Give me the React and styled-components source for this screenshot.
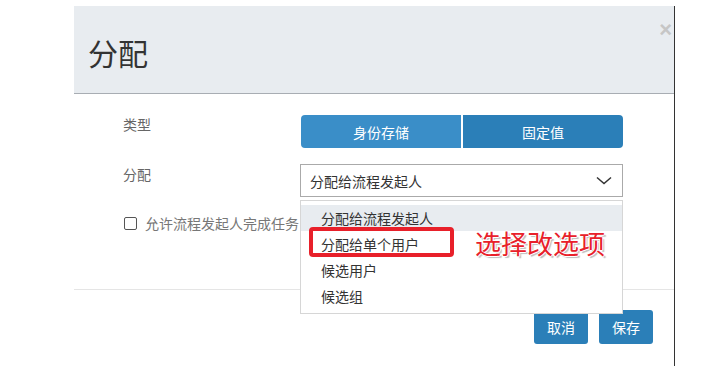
import React from "react";
import styled, { createGlobalStyle } from "styled-components";

const Global = createGlobalStyle`
  html, body { margin: 0; padding: 0; background: #fff; }
  body { font-family: "Noto Sans CJK SC", "Noto Sans", sans-serif; font-size: 14px; color: #333; }
  *, *::before, *::after { box-sizing: border-box; }
`;

const Page = styled.div`
  width: 721px;
  height: 381px;
  padding: 6px 0 0 74px;
  overflow: hidden;
`;

const Modal = styled.div`
  width: 601px;
  height: 360px;
  border-right: 1px solid #333;
  display: flex;
  flex-direction: column;
  background: #fff;
`;

const Header = styled.div`
  height: 88px;
  flex: none;
  background: #e8ecf0;
  border-bottom: 1px solid #a8adb3;
  display: flex;
  justify-content: space-between;
  align-items: flex-start;
  padding: 26px 2px 0 14px;
`;

const Title = styled.h1`
  margin: 0;
  font-size: 30px;
  line-height: 40px;
  font-weight: 400;
  color: #333;
`;

const Close = styled.span`
  margin-top: -14px;
  font-family: "Liberation Sans", sans-serif;
  font-size: 22px;
  line-height: 24px;
  font-weight: 700;
  color: #c6c6c6;
`;

const Body = styled.div`
  height: 196px;
  flex: none;
  padding: 21px 0 0 49px;
  display: grid;
  grid-template-columns: 177px 323px;
  grid-auto-rows: min-content;
  row-gap: 16px;
  border-bottom: 1px solid #e5e5e5;
`;

const Label = styled.div`
  line-height: 20px;
  color: #666;
  margin-top: ${(p) => p.$offset || 0}px;
`;

const Segmented = styled.div`
  display: flex;
  gap: 2px;
  height: 33px;
  padding-left: 1px;
`;

const Segment = styled.button`
  flex: 1;
  border: none;
  margin: 0;
  font-family: inherit;
  font-size: 14px;
  color: #fff;
  background: ${(p) => (p.$active ? "#3a8ec8" : "#2b7fb8")};
  border-radius: ${(p) => (p.$first ? "4px 0 0 4px" : "0 4px 4px 0")};
  cursor: pointer;
`;

const SelectWrap = styled.div`
  position: relative;
`;

const SelectBox = styled.div`
  height: 33px;
  border: 1px solid #aaa;
  display: flex;
  align-items: center;
  justify-content: space-between;
  padding: 0 10px 0 9px;
  color: #333;
  background: #fff;
`;

const Menu = styled.ul`
  position: absolute;
  top: 36px;
  left: 0;
  width: 323px;
  margin: 0;
  padding: 4px 0;
  list-style: none;
  background: #fff;
  border: 1px solid #d6d6d6;
  z-index: 5;
`;

const Option = styled.li`
  position: relative;
  height: 26px;
  line-height: 26px;
  padding-left: 20px;
  color: #333;
  background: ${(p) => (p.$hover ? "#e8ecf0" : "transparent")};
  ${(p) =>
    p.$marked &&
    `
    &::before {
      content: "";
      position: absolute;
      left: 8px;
      top: -4px;
      width: 145px;
      height: 30px;
      border: 4px solid #e8202a;
      border-radius: 4px;
    }
  `}
`;

const Note = styled.span`
  position: absolute;
  left: 174px;
  top: -3px;
  font-size: 26px;
  line-height: 30px;
  color: #e8202a;
  white-space: nowrap;
  text-shadow: 1px 0 0 #fff, -1px 0 0 #fff, 0 1px 0 #fff, 0 -1px 0 #fff,
    2px 2px 1px #bdbdbd;
`;

const CheckRow = styled.label`
  grid-column: 1 / -1;
  display: flex;
  align-items: center;
  gap: 8px;
  height: 20px;
  padding-left: 1px;
  color: #777;
`;

const Box = styled.span`
  width: 13px;
  height: 13px;
  border: 1px solid #555;
  border-radius: 2px;
  background: #fff;
`;

const Footer = styled.div`
  flex: 1;
  display: flex;
  justify-content: flex-end;
  align-items: flex-start;
  gap: 11px;
  padding: 20px 21px 0 0;
`;

const FootButton = styled.button`
  width: 54px;
  height: 34px;
  border: none;
  border-radius: 3px;
  background: #2b7fb8;
  color: #fff;
  font-family: inherit;
  font-size: 14px;
  padding: 0;
`;

const Chevron = () => (
  <svg width="16" height="9" viewBox="0 0 16 9" fill="none">
    <path d="M1 1.5 L8 7.5 L15 1.5" stroke="#333" strokeWidth="1.5" />
  </svg>
);

export default function App() {
  return (
    <>
      <Global />
      <Page>
        <Modal>
          <Header>
            <Title>分配</Title>
            <Close>×</Close>
          </Header>
          <Body>
            <Label $offset={-1}>类型</Label>
            <Segmented>
              <Segment $active $first>身份存储</Segment>
              <Segment>固定值</Segment>
            </Segmented>
            <Label>分配</Label>
            <SelectWrap>
              <SelectBox>
                <span>分配给流程发起人</span>
                <Chevron />
              </SelectBox>
              <Menu>
                <Option $hover>分配给流程发起人</Option>
                <Option $marked>
                  分配给单个用户
                  <Note>选择改选项</Note>
                </Option>
                <Option>候选用户</Option>
                <Option>候选组</Option>
              </Menu>
            </SelectWrap>
            <CheckRow>
              <Box />
              允许流程发起人完成任务
            </CheckRow>
          </Body>
          <Footer>
            <FootButton>取消</FootButton>
            <FootButton>保存</FootButton>
          </Footer>
        </Modal>
      </Page>
    </>
  );
}
